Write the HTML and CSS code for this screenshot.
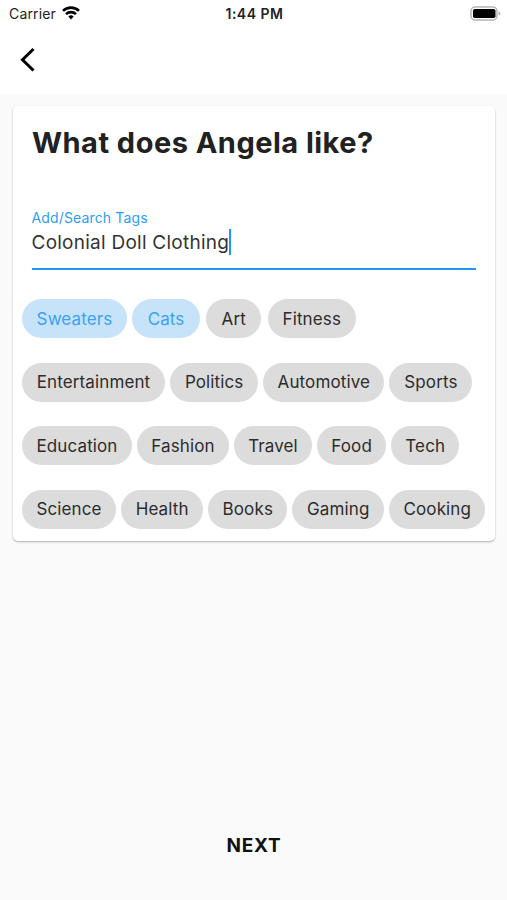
FILE: index.html
```html
<!DOCTYPE html>
<html lang="en">
<head>
<meta charset="utf-8">
<title>Interests</title>
<link rel="stylesheet" href="styles.css">
</head>
<body>
<header class="top">
  <div class="status">
    <div class="carrier"><span>Carrier</span>
      <svg width="18" height="14" viewBox="0 0 18 14"><g fill="none" stroke="#000" stroke-width="2.600"><path d="M1 4.900a11.300 11.300 0 0 1 16 0"/><path d="M4 8.200a7.100 7.100 0 0 1 10 0"/></g><path d="M6.300 10.600a3.800 3.800 0 0 1 5.400 0L9 13.400z"/></svg>
    </div>
    <div class="clock">1:44 PM</div>
    <svg class="battery" width="31" height="15" viewBox="0 0 31 15"><rect x="1" y="1" width="26" height="13" rx="4" fill="none" stroke="#b5b5b5" stroke-width="1.500"/><rect x="3" y="3" width="22.500" height="9" rx="1.800"/><path d="M28.500 5.200q2 .7 2 2.300t-2 2.300z" fill="#b5b5b5"/></svg>
  </div>
  <button class="back" aria-label="Back"><svg width="16" height="26" viewBox="0 0 16 26"><path d="M13.500 2L2.500 12.700l11 10.800" fill="none" stroke="#000" stroke-width="3"/></svg></button>
</header>
<main class="card">
  <h1>What does Angela like?</h1>
  <div class="field">
    <label>Add/Search Tags</label>
    <div class="value"><span>Colonial Doll Clothing</span><i class="caret"></i></div>
  </div>
  <div class="chips">
    <div class="row first"><span class="chip on w105">Sweaters</span><span class="chip on w67">Cats</span><span class="chip w55">Art</span><span class="chip w88">Fitness</span></div>
    <div class="row"><span class="chip w143">Entertainment</span><span class="chip w88">Politics</span><span class="chip w121">Automotive</span><span class="chip w83">Sports</span></div>
    <div class="row"><span class="chip w110">Education</span><span class="chip w92">Fashion</span><span class="chip w78">Travel</span><span class="chip w69">Food</span><span class="chip w68">Tech</span></div>
    <div class="row"><span class="chip w94">Science</span><span class="chip w82">Health</span><span class="chip w79">Books</span><span class="chip w92">Gaming</span><span class="chip w96">Cooking</span></div>
  </div>
</main>
<button class="next">NEXT</button>
</body>
</html>
```
FILE: styles.css
```css
* { box-sizing: border-box; }
body { margin: 0; height: 900px; display: flex; flex-direction: column; background: #fafafa; color: #212121; font-family: Inter, "Liberation Sans", sans-serif; overflow: hidden; }
svg { display: block; }
button { border: 0; padding: 0; background: none; font: inherit; }
.top { height: 94px; background: #fff; }
.status { height: 27px; padding: 0 6px 0 9px; display: grid; grid-template-columns: 1fr auto 1fr; align-items: center; font-size: 14px; color: #222; }
.carrier { display: flex; align-items: center; gap: 6px; letter-spacing: .15px; }
.carrier svg { margin-top: -2px; }
.clock { font-weight: 600; letter-spacing: .5px; margin-left: -1px; }
.battery { justify-self: end; margin-top: -1px; }
.back { display: block; margin: 20px 0 0 20px; }
.card { margin: 12px 12px 0 13px; height: 435px; background: #fff; border-radius: 5px; box-shadow: 0 1px 2px rgba(0,0,0,.3); }
h1 { margin: 0; padding: 18px 0 0 19px; font-size: 29px; line-height: 37px; font-weight: 650; letter-spacing: .48px; white-space: nowrap; }
.field { margin: 48px 19px 0 18.500px; height: 61px; border-bottom: 2px solid #2196f3; }
label { display: block; font-size: 14px; line-height: 18px; color: #2f9cf4; letter-spacing: .14px; }
.value { display: flex; align-items: center; height: 30px; font-size: 19px; letter-spacing: .25px; color: #333; white-space: nowrap; }
.caret { width: 2px; height: 26px; background: #2196f3; }
.chips { margin: 29px 0 0 9px; display: flex; flex-direction: column; gap: 24.600px; }
.row { display: flex; gap: 5.150px; }
.first { gap: 5.300px; }
.first .w55, .first .w88 { margin-left: 1.200px; }
.chip { flex: none; height: 39px; border-radius: 20px; background: #dcdcdc; display: flex; align-items: center; justify-content: center; font-size: 17px; letter-spacing: .12px; color: #2c2c2c; }
.on { background: #c7e3fa; color: #3ba1f5; }
.w105 { width: 105px; } .w67 { width: 67.500px; } .w55 { width: 55px; } .w88 { width: 88px; }
.w143 { width: 143px; } .w121 { width: 121px; } .w83 { width: 83px; } .w110 { width: 110px; }
.w92 { width: 91.700px; } .w78 { width: 78px; } .w69 { width: 69px; } .w68 { width: 68px; }
.w94 { width: 94px; } .w82 { width: 82px; } .w79 { width: 79px; } .w96 { width: 96px; }
.next { margin: 288px auto 0; padding-left: 1px; height: 32px; font-size: 19px; font-weight: 650; letter-spacing: .7px; color: #111; }
```
